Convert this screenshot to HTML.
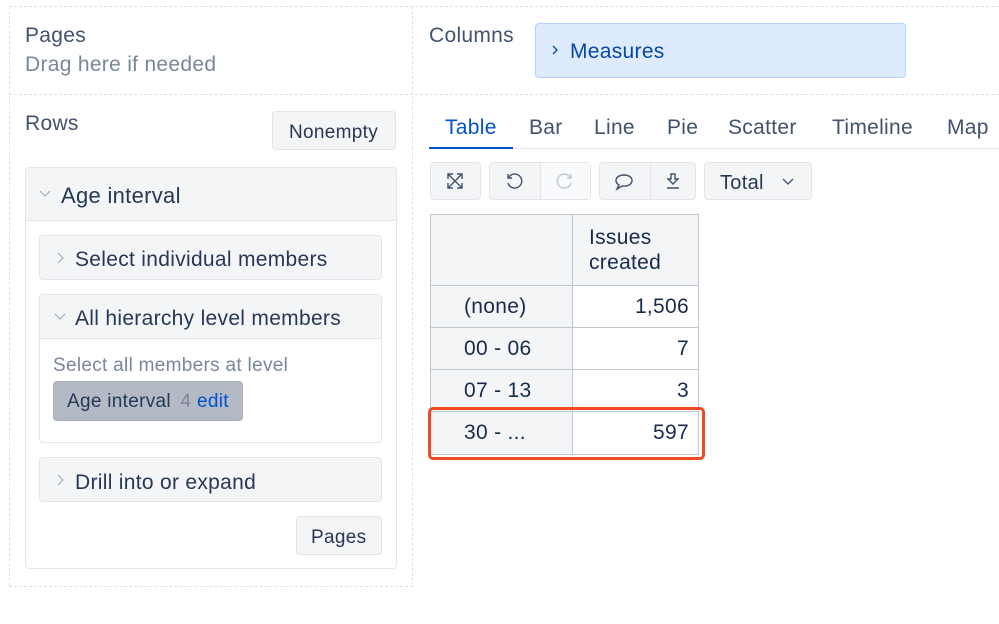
<!DOCTYPE html>
<html><head><meta charset="utf-8"><style>
*{box-sizing:border-box;margin:0;padding:0}
body{width:999px;height:624px;background:#fff;font-family:"Liberation Sans",sans-serif;color:#253858;position:relative;overflow:hidden;letter-spacing:0.3px}
.a{position:absolute}
.dh{position:absolute;border-top:1px dashed #dfe1e6;height:0}
.dv{position:absolute;border-left:1px dashed #dfe1e6;width:0}
.t{position:absolute;white-space:nowrap;line-height:1}
.btn{position:absolute;background:#f4f5f7;border:1px solid #e3e5e9;border-radius:4px}
.box{position:absolute;border:1px solid #e3e5e9;border-radius:4px}
td{border:1px solid #c1c7d0;font-size:21px;color:#172b4d}
</style></head><body>
<div class="dh" style="left:9px;top:6px;width:990px"></div>
<div class="dh" style="left:9px;top:94px;width:990px"></div>
<div class="dh" style="left:9px;top:586px;width:404px"></div>
<div class="dv" style="left:9px;top:6px;height:580px"></div>
<div class="dv" style="left:412px;top:6px;height:580px"></div>

<div class="t" style="left:25px;top:25px;font-size:21px;color:#42526e">Pages</div>
<div class="t" style="left:25px;top:54px;font-size:21px;color:#7a869a">Drag here if needed</div>
<div class="t" style="left:25px;top:113px;font-size:21px;color:#42526e">Rows</div>
<div class="btn" style="left:272px;top:111px;width:124px;height:39px"></div>
<div class="t" style="left:289px;top:123px;font-size:19px;color:#253858">Nonempty</div>

<div class="box" style="left:25px;top:167px;width:372px;height:402px"></div>
<div class="a" style="left:26px;top:168px;width:370px;height:53px;background:#f4f5f7;border-bottom:1px solid #e3e5e9;border-radius:4px 4px 0 0"></div>
<svg class="a" style="left:39px;top:190px" width="12" height="8"><path d="M1 1L6 6L11 1" fill="none" stroke="#a5adba" stroke-width="1.2"/></svg>
<div class="t" style="left:61px;top:185px;font-size:22px">Age interval</div>

<div class="btn" style="left:39px;top:235px;width:343px;height:45px"></div>
<svg class="a" style="left:57px;top:252px" width="8" height="12"><path d="M1 1L6 6L1 11" fill="none" stroke="#a5adba" stroke-width="1.2"/></svg>
<div class="t" style="left:75px;top:249px;font-size:21px">Select individual members</div>

<div class="box" style="left:39px;top:294px;width:343px;height:149px"></div>
<div class="a" style="left:40px;top:295px;width:341px;height:44px;background:#f4f5f7;border-bottom:1px solid #e3e5e9"></div>
<svg class="a" style="left:54px;top:313px" width="12" height="8"><path d="M1 1L6 6L11 1" fill="none" stroke="#a5adba" stroke-width="1.2"/></svg>
<div class="t" style="left:75px;top:308px;font-size:21px">All hierarchy level members</div>
<div class="t" style="left:53px;top:356px;font-size:19px;color:#7a869a">Select all members at level</div>
<div class="a" style="left:53px;top:381px;width:190px;height:40px;background:#b3bac5;border:1px solid #a5adba;border-radius:4px"></div>
<div class="t" style="left:67px;top:392px;font-size:19px;color:#253858">Age interval <span style="color:#7a869a;margin-left:4px">4</span> <span style="color:#0052cc">edit</span></div>

<div class="btn" style="left:39px;top:457px;width:343px;height:45px"></div>
<svg class="a" style="left:57px;top:474px" width="8" height="12"><path d="M1 1L6 6L1 11" fill="none" stroke="#a5adba" stroke-width="1.2"/></svg>
<div class="t" style="left:75px;top:472px;font-size:21px">Drill into or expand</div>
<div class="btn" style="left:296px;top:516px;width:86px;height:39px"></div>
<div class="t" style="left:311px;top:528px;font-size:19px">Pages</div>

<div class="t" style="left:429px;top:25px;font-size:21px;color:#42526e">Columns</div>
<div class="a" style="left:535px;top:23px;width:371px;height:55px;background:#deebff;border:1px solid #b3d4ff;border-radius:4px"></div>
<svg class="a" style="left:552px;top:45px" width="7" height="10"><path d="M1 1L5 5L1 9" fill="none" stroke="#0747a6" stroke-width="1.3"/></svg>
<div class="t" style="left:570px;top:41px;font-size:21px;color:#0747a6">Measures</div>

<div class="a" style="left:429px;top:148px;width:570px;height:1px;background:#e3e5e9"></div>
<div class="a" style="left:429px;top:147px;width:84px;height:2px;background:#0052cc"></div>
<div class="t" style="left:445px;top:117px;font-size:21px;color:#0052cc">Table</div>
<div class="t" style="left:529px;top:117px;font-size:21px;color:#42526e">Bar</div>
<div class="t" style="left:594px;top:117px;font-size:21px;color:#42526e">Line</div>
<div class="t" style="left:667px;top:117px;font-size:21px;color:#42526e">Pie</div>
<div class="t" style="left:728px;top:117px;font-size:21px;color:#42526e">Scatter</div>
<div class="t" style="left:832px;top:117px;font-size:21px;color:#42526e">Timeline</div>
<div class="t" style="left:947px;top:117px;font-size:21px;color:#42526e">Map</div>

<div class="btn" style="left:430px;top:162px;width:51px;height:38px"></div>
<svg class="a" style="left:446px;top:172px" width="18" height="18" fill="none" stroke="#42526e" stroke-width="1.4"><path d="M2 2L16 16M16 2L2 16M2 7V2H7M11 2H16V7M2 11V16H7M11 16H16V11"/></svg>
<div class="btn" style="left:489px;top:162px;width:102px;height:38px"></div>
<div class="a" style="left:540px;top:163px;width:50px;height:36px;background:#f9fafb;border-left:1px solid #e3e5e9"></div>
<svg class="a" style="left:505px;top:172px" width="18" height="18" fill="none" stroke="#42526e" stroke-width="1.4"><path d="M4 5A7 7 0 1 1 3 11M3 2V6H7"/></svg>
<svg class="a" style="left:556px;top:172px" width="18" height="18" fill="none" stroke="#c1c7d0" stroke-width="1.4"><path d="M14 5A7 7 0 1 0 15 11M15 2V6H11"/></svg>
<div class="btn" style="left:599px;top:162px;width:97px;height:38px"></div>
<div class="a" style="left:650px;top:163px;width:1px;height:36px;background:#e3e5e9"></div>
<svg class="a" style="left:614px;top:173px" width="20" height="18" fill="none" stroke="#42526e" stroke-width="1.4"><path d="M10 2C5 2 2 4.5 2 7.5C2 9.5 3.3 11 5 12L3 16L8 13C8.7 13.1 9.3 13.2 10 13.2C15 13.2 18 10.5 18 7.5C18 4.5 15 2 10 2Z"/></svg>
<svg class="a" style="left:665px;top:172px" width="16" height="18" fill="none" stroke="#42526e" stroke-width="1.4"><path d="M6 2H10V7H13L8 12L3 7H6Z M2 16H14"/></svg>
<div class="btn" style="left:704px;top:162px;width:108px;height:38px"></div>
<div class="t" style="left:720px;top:173px;font-size:20px;color:#253858">Total</div>
<svg class="a" style="left:782px;top:178px" width="12" height="8"><path d="M1 1L6 6L11 1" fill="none" stroke="#42526e" stroke-width="1.3"/></svg>

<table class="a" style="left:430px;top:214px;border-collapse:collapse;width:269px">
<tr style="height:71px"><td style="width:142px;background:#f4f5f7"></td><td style="background:#f4f5f7;padding-left:16px;line-height:25px">Issues<br>created</td></tr>
<tr style="height:42px"><td style="background:#f4f5f7;padding-left:33px">(none)</td><td style="text-align:right;padding-right:9px">1,506</td></tr>
<tr style="height:42px"><td style="background:#f4f5f7;padding-left:33px">00 - 06</td><td style="text-align:right;padding-right:9px">7</td></tr>
<tr style="height:42px"><td style="background:#f4f5f7;padding-left:33px">07 - 13</td><td style="text-align:right;padding-right:9px">3</td></tr>
<tr style="height:43px"><td style="background:#f4f5f7;padding-left:33px">30 - ...</td><td style="text-align:right;padding-right:9px">597</td></tr>
</table>
<div class="a" style="left:428px;top:407px;width:277px;height:53px;border:3px solid #f04a23;border-radius:5px"></div>
</body></html>
